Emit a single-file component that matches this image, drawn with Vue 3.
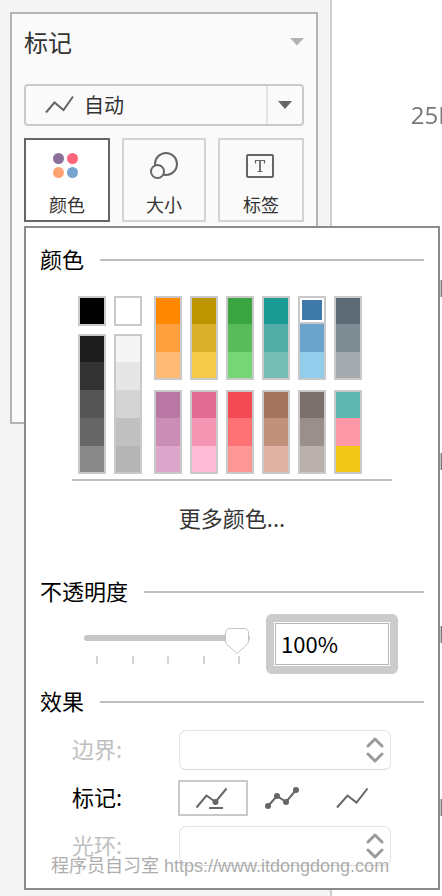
<script setup>
import { ref } from 'vue'

const axisLabels = ['25K', '20K', '15K', '10K', '5K']

const neutrals = [
  [['#000000'], ['#1c1c1c', '#333333', '#555555', '#666666', '#898989']],
  [['#ffffff'], ['#f5f5f5', '#e6e6e6', '#d4d4d4', '#c0c0c0', '#b4b4b4']]
]

const colors = [
  ['#ff8800', '#ffa03f', '#ffbb75'],
  ['#bb9600', '#d9b02c', '#f7cc4b'],
  ['#3ba443', '#59bb5b', '#76d577'],
  ['#1b9993', '#52aca6', '#76bdb5'],
  ['#407aab', '#69a2ca', '#94cdec'],
  ['#5d6b76', '#7f8b93', '#a5abae'],
  ['#b977a4', '#c98db6', '#dca5ca'],
  ['#e26b94', '#f495b3', '#ffbbd3'],
  ['#f44b54', '#ff7377', '#ff9797'],
  ['#a4745c', '#c1917c', '#deb3a3'],
  ['#7c706f', '#9a8f8a', '#bab0ac'],
  ['#5fb8b2', '#ff98a6', '#f3c716']
]

const selected = ref('#407aab')
const opacity = ref(100)
const marker = ref('auto')
</script>

<template>
  <div class="page">
    <aside class="sidebar">
      <section class="card">
        <header class="card-head">
          <h1>标记</h1>
          <svg class="caret light" viewBox="0 0 14 8"><path d="M0 0h14L7 7.5z" /></svg>
        </header>

        <label class="combo">
          <svg class="line-icon" viewBox="0 0 30 20"><path d="M2 17.500L10.500 7.500L19.500 15L29 1.500" /></svg>
          <select aria-label="标记类型"><option>自动</option></select>
          <span class="combo-arrow"><svg class="caret" viewBox="0 0 14 8"><path d="M0 0h14L7 8z" /></svg></span>
        </label>

        <div class="shelf">
          <div class="tabs">
            <button type="button" class="tab active">
              <svg viewBox="0 0 30 30">
                <circle cx="6.500" cy="8.500" r="5.500" fill="#8a6f9b" />
                <circle cx="20.500" cy="8.500" r="5.500" fill="#ff667c" />
                <circle cx="6.500" cy="22.500" r="5.500" fill="#ffa274" />
                <circle cx="20.500" cy="22.500" r="5.500" fill="#77a5cf" />
              </svg>
              <span>颜色</span>
            </button>
            <button type="button" class="tab">
              <svg viewBox="0 0 30 30" fill="#fafafa" stroke="#666" stroke-width="2">
                <circle cx="17" cy="14" r="11" />
                <circle cx="8.500" cy="21.500" r="6.500" />
              </svg>
              <span>大小</span>
            </button>
            <button type="button" class="tab">
              <svg viewBox="0 0 30 30" fill="none" stroke="#666">
                <rect x="1" y="5" width="26" height="22" rx="1" stroke-width="2" />
                <path d="M9.500 13.500V10.500H18.500V13.500M11.500 21.500H16.500" stroke-width="1.200" />
                <path d="M14 10.500V21.500" stroke-width="1.800" />
              </svg>
              <span>标签</span>
            </button>
          </div>

          <div class="popup">
            <h2 class="heading">颜色</h2>
            <div class="palette">
              <div class="neutrals">
                <div v-for="(column, i) in neutrals" :key="i" class="neutral-column">
                  <div v-for="(stack, j) in column" :key="j" class="stack">
                    <button
                      v-for="c in stack"
                      :key="c"
                      type="button"
                      class="swatch"
                      :class="{ selected: c === selected }"
                      :style="{ backgroundColor: c }"
                      :aria-label="c"
                      @click="selected = c"
                    ></button>
                  </div>
                </div>
              </div>
              <div class="hues">
                <div v-for="(stack, i) in colors" :key="i" class="stack">
                  <button
                    v-for="c in stack"
                    :key="c"
                    type="button"
                    class="swatch"
                    :class="{ selected: c === selected }"
                    :style="{ backgroundColor: c }"
                    :aria-label="c"
                    @click="selected = c"
                  ></button>
                </div>
              </div>
            </div>
            <hr class="rule" />
            <button type="button" class="more">更多颜色...</button>

            <h2 class="heading">不透明度</h2>
            <div class="opacity">
              <div class="slider">
                <input v-model="opacity" type="range" min="0" max="100" aria-label="不透明度" />
                <div class="ticks"><i v-for="n in 5" :key="n"></i></div>
              </div>
              <div class="value-ring">
                <input type="text" :value="opacity + '%'" aria-label="不透明度百分比" />
              </div>
            </div>

            <h2 class="heading">效果</h2>
            <div class="effects">
              <div class="row disabled">
                <label for="border">边界:</label>
                <div class="dropdown">
                  <select id="border" disabled></select>
                  <svg viewBox="0 0 18 26"><path d="M2 9L9 2L16 9M2 17L9 24L16 17" /></svg>
                </div>
              </div>
              <div class="row">
                <span>标记:</span>
                <div class="markers">
                  <button type="button" :class="{ on: marker === 'auto' }" aria-label="自动" @click="marker = 'auto'">
                    <svg viewBox="0 0 36 24">
                      <path d="M1.500 21.500L11.500 9.500L20.500 16L31.500 2.500M14 22H28" />
                      <circle cx="20.500" cy="16" r="3" />
                    </svg>
                  </button>
                  <button type="button" :class="{ on: marker === 'all' }" aria-label="全部" @click="marker = 'all'">
                    <svg viewBox="0 0 36 24">
                      <path d="M3 20L12 10L21 16L31 4" />
                      <circle cx="3" cy="20" r="3" />
                      <circle cx="12" cy="10" r="3" />
                      <circle cx="21" cy="16" r="3" />
                      <circle cx="31" cy="4" r="3" />
                    </svg>
                  </button>
                  <button type="button" :class="{ on: marker === 'none' }" aria-label="无" @click="marker = 'none'">
                    <svg viewBox="0 0 36 24"><path d="M2 21.500L12.500 9.500L21.500 16.500L32.500 2.500" /></svg>
                  </button>
                </div>
              </div>
              <div class="row disabled">
                <label for="halo">光环:</label>
                <div class="dropdown">
                  <select id="halo" disabled></select>
                  <svg viewBox="0 0 18 26"><path d="M2 9L9 2L16 9M2 17L9 24L16 17" /></svg>
                </div>
              </div>
            </div>
            <p class="watermark">程序员自习室 https://www.itdongdong.com</p>
          </div>
        </div>
      </section>
    </aside>
    <main class="canvas">
      <ul class="axis">
        <li v-for="label in axisLabels" :key="label">{{ label }}</li>
      </ul>
    </main>
  </div>
</template>

<style>
body {
  margin: 0;
  background: #fff;
}
</style>

<style scoped>
* {
  box-sizing: border-box;
}
.page {
  display: flex;
  min-height: 100vh;
  overflow: hidden;
  font-family: "Noto Sans CJK SC", sans-serif;
  color: #333;
}
button,
select,
input {
  font: inherit;
  color: inherit;
  margin: 0;
  padding: 0;
  border: 0;
  background: none;
  outline: none;
}
.sidebar {
  position: relative;
  z-index: 1;
  flex: none;
  width: 332px;
  padding: 12px 12px 12px 10px;
  background: #f4f4f4;
  border-right: 2px solid #cecece;
}
.card {
  min-height: 412px;
  padding: 10px 12px;
  background: #fafafa;
  border: 2px solid #b3b3b3;
}
.card-head {
  display: flex;
  align-items: center;
  justify-content: space-between;
  height: 36px;
}
h1 {
  margin: 0;
  font-size: 24px;
  line-height: 36px;
  font-weight: 400;
}
.caret {
  display: block;
  width: 14px;
  height: 8px;
  fill: #666;
}
.caret.light {
  fill: #b3b3b3;
}
.combo {
  display: flex;
  align-items: stretch;
  height: 42px;
  margin-top: 24px;
  padding-left: 18px;
  border: 2px solid #c9c9c9;
  border-radius: 4px;
}
.line-icon {
  align-self: center;
  width: 30px;
  height: 20px;
  fill: none;
  stroke: #666;
  stroke-width: 2;
}
.combo select {
  flex: 1;
  min-width: 0;
  padding: 0 0 2px 10px;
  appearance: none;
  font-size: 20px;
}
.combo-arrow {
  display: flex;
  align-items: center;
  justify-content: center;
  width: 36px;
  border-left: 2px solid #e3e3e3;
}
.shelf {
  position: relative;
  margin-top: 12px;
}
.tabs {
  display: grid;
  grid-template-columns: 86fr 84fr 86fr;
  gap: 12px;
}
.tab {
  display: flex;
  flex-direction: column;
  align-items: center;
  gap: 12px;
  height: 84px;
  padding-top: 10px;
  border: 2px solid #d3d3d3;
  font-size: 18px;
  line-height: 24px;
}
.tab svg {
  width: 30px;
  height: 30px;
}
.tab.active {
  background: #fff;
  border-color: #666;
}
.popup {
  position: absolute;
  top: calc(100% + 4px);
  left: 0;
  width: 416px;
  padding: 16px 14px 22px;
  background: #fff;
  border: 2px solid #8b8b8b;
  font-size: 22px;
}
.heading {
  display: flex;
  align-items: center;
  gap: 16px;
  margin: 0 0 4px;
  font-size: 22px;
  line-height: 28px;
  font-weight: 400;
  color: #000;
}
.heading::after {
  content: "";
  flex: 1;
  height: 2px;
  margin-top: 4px;
  background: #bfbfbf;
}
.palette {
  display: flex;
  gap: 12px;
  padding: 20px 0 0 38px;
}
.neutrals {
  display: flex;
  gap: 8px;
}
.neutral-column {
  display: flex;
  flex-direction: column;
  gap: 8px;
}
.hues {
  display: grid;
  grid-template-columns: repeat(6, 28px);
  gap: 10px 8px;
}
.stack {
  display: flex;
  flex-direction: column;
  width: 28px;
  border: 2px solid #c9c9c9;
}
.swatch {
  height: 28px;
}
.swatch:first-child,
.swatch:last-child {
  height: 26px;
}
.swatch.selected {
  border-bottom: 2px solid #c9c9c9;
  box-shadow: inset 0 0 0 2px #fff;
}
.rule {
  height: 2px;
  margin: 5px 32px 0;
  border: 0;
  background: #bfbfbf;
}
.more {
  display: block;
  margin: 18px auto 41px;
  line-height: 36px;
}
.opacity {
  display: flex;
  gap: 16px;
  padding: 6px 0 12px 44px;
}
.slider {
  width: 166px;
  padding-top: 14px;
}
.slider input {
  display: block;
  width: 100%;
  height: 20px;
  appearance: none;
}
.slider input::-webkit-slider-runnable-track {
  height: 6px;
  border-radius: 3px;
  background: #c6c6c6;
}
.slider input::-webkit-slider-thumb {
  appearance: none;
  width: 26px;
  height: 28px;
  margin-top: -8px;
  background: url("data:image/svg+xml,%3Csvg xmlns='http://www.w3.org/2000/svg' viewBox='0 0 26 28'%3E%3Cpath d='M6 1.500H20Q24.500 1.500 24.500 6V14Q24.500 16 23 17.500L13 26.500L3 17.500Q1.500 16 1.500 14V6Q1.500 1.500 6 1.500Z' fill='white' stroke='%23c4c4c4'/%3E%3C/svg%3E") no-repeat;
}
.ticks {
  display: flex;
  justify-content: space-between;
  margin-top: 8px;
  padding: 0 10px 0 12px;
}
.ticks i {
  width: 2px;
  height: 8px;
  background: #d3d3d3;
}
.value-ring {
  width: 132px;
  height: 60px;
  padding: 8px;
  border-radius: 6px;
  background: #cbcbcd;
}
.value-ring input {
  display: block;
  width: 100%;
  height: 44px;
  padding: 0 0 2px 6px;
  border: 1px solid #fff;
  box-shadow: inset 0 0 0 1px #b8b8b8;
  background: #fff;
  color: #000;
}
.effects {
  display: grid;
  gap: 8px;
  padding: 8px 33px 0 32px;
  margin-top: 8px;
}
.row {
  display: grid;
  grid-template-columns: 106px 1fr;
  align-items: start;
  height: 40px;
  line-height: 36px;
  color: #000;
}
.row.disabled {
  color: #c0c0c0;
}
.dropdown {
  display: grid;
  height: 40px;
  margin-left: 1px;
}
.dropdown select,
.dropdown svg {
  grid-area: 1 / 1;
}
.dropdown select {
  appearance: none;
  height: 40px;
  border: 1px solid #e3e3e3;
  border-bottom-color: #d6d6d6;
  border-radius: 7px;
  opacity: 1;
}
.dropdown svg {
  align-self: center;
  justify-self: end;
  width: 18px;
  height: 26px;
  margin-right: 7px;
  fill: none;
  stroke: #9b9b9b;
  stroke-width: 3;
  stroke-linecap: round;
  stroke-linejoin: round;
  pointer-events: none;
}
.markers {
  display: flex;
  padding-top: 2px;
}
.markers button {
  display: flex;
  flex: none;
  align-items: center;
  justify-content: center;
  width: 70px;
  height: 36px;
  border: 2px solid transparent;
}
.markers button.on {
  border-color: #c9c9c9;
}
.markers svg {
  width: 36px;
  height: 24px;
  fill: none;
  stroke: #666;
  stroke-width: 2;
}
.markers circle {
  fill: #666;
  stroke: none;
}
.watermark {
  position: absolute;
  left: 25px;
  bottom: 10px;
  margin: 0;
  font-family: "Liberation Sans", "Noto Sans CJK SC", sans-serif;
  font-size: 18px;
  line-height: 24px;
  white-space: nowrap;
  color: #adadad;
}
.canvas {
  flex: 1;
  min-width: 0;
  overflow: hidden;
}
.axis {
  width: 121px;
  margin: 0;
  padding: 28px 0 0;
  list-style: none;
  font-family: "Open Sans", sans-serif;
  font-size: 24px;
  text-align: right;
  color: #777;
  will-change: transform;
}
.axis li {
  height: 173px;
  line-height: 173px;
}
.axis li:last-child {
  height: 150px;
}
</style>
